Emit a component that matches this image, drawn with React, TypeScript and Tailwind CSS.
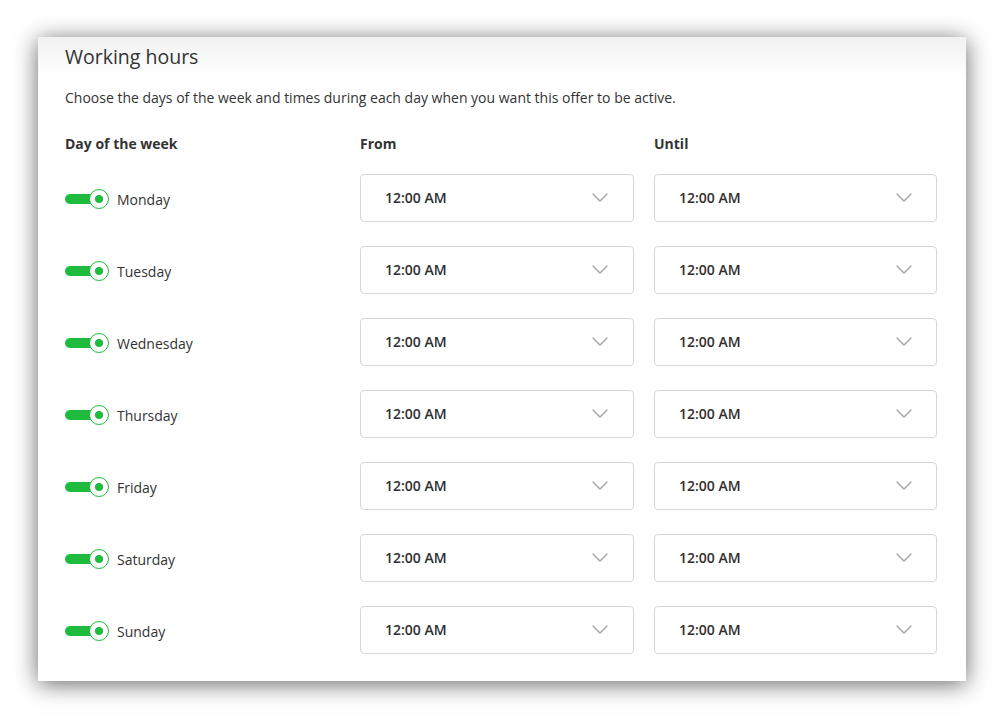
import React from "react";

const days = ["Monday", "Tuesday", "Wednesday", "Thursday", "Friday", "Saturday", "Sunday"];

const Chevron = () => (
  <svg width="16" height="9" viewBox="0 0 16 9" fill="none">
    <path d="M1 1l7 7 7-7" stroke="#a9a9a9" strokeWidth="1.5" strokeLinecap="round" strokeLinejoin="round" />
  </svg>
);

const Toggle = () => (
  <div className="relative h-5 w-[44px] shrink-0">
    <div className="absolute left-0 top-[5px] h-[10px] w-[37px] rounded-full bg-[#1fbb3c]" />
    <div className="absolute right-0 top-0 flex h-5 w-5 items-center justify-center rounded-full border-[1.5px] border-[#1fbb3c] bg-white">
      <div className="h-2 w-2 rounded-full bg-[#1fbb3c]" />
    </div>
  </div>
);

const TimeSelect = ({ pr = "pr-[25px]" }: { pr?: string }) => (
  <div className={`flex h-12 items-center justify-between rounded-[4px] border border-[#d7d7d7] bg-white pl-6 pb-[1px] ${pr}`}>
    <span className="text-[14px] font-semibold text-[#2f2f2f]">12:00 AM</span>
    <Chevron />
  </div>
);

export default function App() {
  return (
    <div className="min-h-[720px] w-full bg-white pt-[37px] pl-[38px]" style={{ fontFamily: '"Open Sans", "Liberation Sans", sans-serif' }}>
      <div className="w-[928px] h-[644px] bg-[linear-gradient(to_bottom,#f1f1f1_0px,#ffffff_40px)] pl-[27px] pr-[30px] pt-2 shadow-[0_3px_22px_rgba(0,0,0,0.6)]">
        <h1 className="text-[19.5px] leading-6 text-[#333]">Working hours</h1>
        <p className="mt-[19px] text-[14px] leading-5 text-[#333]">
          Choose the days of the week and times during each day when you want this offer to be active.
        </p>
        <div className="mt-[26px] grid grid-cols-[275px_274px_282px] gap-x-5 text-[14px] font-bold leading-5 text-[#333]">
          <div>Day of the week</div>
          <div>From</div>
          <div>Until</div>
        </div>
        <div className="mt-[20px] flex flex-col gap-6">
          {days.map((d) => (
            <div key={d} className="grid grid-cols-[275px_274px_283px] gap-x-5 items-center">
              <div className="flex items-center gap-2 pt-[2px]">
                <Toggle />
                <span className="text-[14px] text-[#333]">{d}</span>
              </div>
              <TimeSelect pr="pr-[25px]" />
              <TimeSelect pr="pr-[24px]" />
            </div>
          ))}
        </div>
      </div>
    </div>
  );
}
